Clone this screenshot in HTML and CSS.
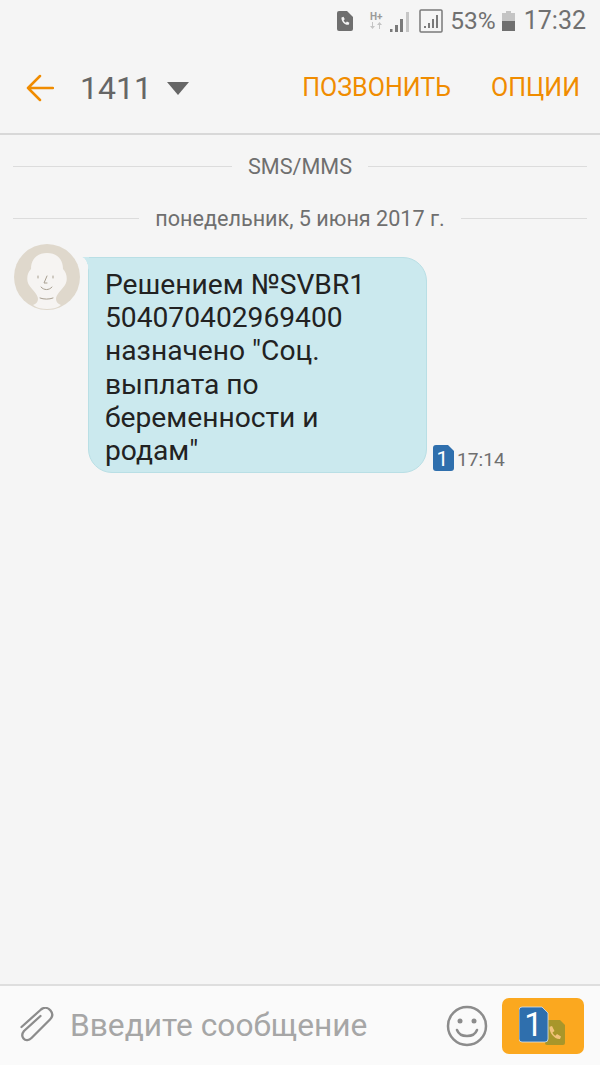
FILE: index.html

```html
<!DOCTYPE html>
<html>
<head>
    <title>1411</title>
    <link rel="stylesheet" href="styles.css">
</head>
<body>
    <div class="screen">
        <div class="status-bar">
            <svg class="st-call" width="16" height="20" viewBox="0 0 16 20">
                <path d="M2 0h8l6 6v12a2 2 0 0 1-2 2H2a2 2 0 0 1-2-2V2a2 2 0 0 1 2-2z" fill="#6f6f6f"/>
                <path d="M4.500 6.500l2-.8 1.300 2.600-1.200 1c.5 1.200 1.200 1.900 2.300 2.400l1-1.200 2.500 1.300-.7 2c-3.800.6-7.800-3.700-7.200-7.300z" fill="#f5f5f5"/>
            </svg>
            <div class="st-net">
                <span>H+</span>
                <svg width="14" height="7" viewBox="0 0 14 7"><path d="M3 0v4H1l2.500 3L6 4H4V0zM10 7V3H8l2.500-3L13 3h-2v4z" fill="#c4c4c4"/></svg>
            </div>
            <svg class="st-signal" width="20" height="21" viewBox="0 0 20 21">
                <path d="M0 21h2.500v-3H0zM5 21h3v-7H5zM10 21h3V8h-3z" fill="#7a7a7a"/>
                <path d="M16 21h3V1h-3z" fill="#c6c6c6"/>
            </svg>
            <svg class="st-signal-box" width="24" height="24" viewBox="0 0 24 24">
                <rect x="1" y="1" width="22" height="22" rx="1" fill="none" stroke="#7a7a7a" stroke-width="1.500"/>
                <path d="M5 19h2v-2H5zM9 19h2v-5H9zM13 19h2v-9h-2zM17 19h2V6h-2z" fill="#7a7a7a"/>
            </svg>
            <span class="st-text st-percent">53%</span>
            <svg class="st-battery" width="13" height="20" viewBox="0 0 13 20">
                <path d="M4 0h5v2h4v8H0V2h4z" fill="#c4c4c4"/>
                <path d="M0 10h13v10H0z" fill="#6f6f6f"/>
            </svg>
            <span class="st-text st-time">17:32</span>
        </div>

        <div class="app-bar">
            <svg class="back" width="28" height="28" viewBox="0 0 28 28">
                <path d="M27 14H2M14 2L2 14l12 12" fill="none" stroke="#f08c00" stroke-width="2.500" stroke-linecap="round" stroke-linejoin="round"/>
            </svg>
            <span class="contact">1411</span>
            <svg class="caret" width="22" height="13" viewBox="0 0 22 13"><path d="M0 0h22L11 13z" fill="#666"/></svg>
            <a class="action call">ПОЗВОНИТЬ</a>
            <a class="action">ОПЦИИ</a>
        </div>

        <div class="thread">
            <div class="divider"><span>SMS/MMS</span></div>
            <div class="divider date"><span>понедельник, 5 июня 2017 г.</span></div>

            <div class="message">
                <svg class="avatar" width="66" height="66" viewBox="0 0 66 66">
                    <circle cx="33" cy="33" r="33" fill="#dfd8cc"/>
                    <path d="M33 9C23 9 17 15 17 25c-4 4-5 11-2 16 3 5 9 9 9 14 0 3-2 5-5 6 4 3 9 4 14 4s10-1 14-4c-3-1-5-3-5-6 0-5 6-9 9-14 3-5 2-12-2-16C49 15 43 9 33 9z" fill="#f6f4f2"/>
                    <path d="M24 32v2M39 32v2M33 32l-3 7h3M27 43c3 3.500 8 3.500 11 0M26 54c4 1.500 9 1.500 13 0" fill="none" stroke="#a89f90" stroke-width="1" stroke-linecap="round"/>
                </svg>
                <div class="bubble">Решением №SVBR1<br>504070402969400<br>назначено "Соц.<br>выплата по<br>беременности и<br>родам"</div>
                <div class="meta">
                    <svg class="sim-small" width="21" height="26" viewBox="0 0 21 26">
                        <path d="M3 0h12l6 6v17a3 3 0 0 1-3 3H3a3 3 0 0 1-3-3V3a3 3 0 0 1 3-3z" fill="#2f6fad"/>
                        <text x="9.500" y="21" class="sim-num-small">1</text>
                    </svg>
                    <span class="meta-time">17:14</span>
                </div>
            </div>
        </div>

        <div class="composer">
            <svg class="clip" width="34" height="37" viewBox="0 0 34 37">
                <path d="M1.500 20L21 2.500c3-2.500 7-2 9.500 1 2.500 3 2 6.500-.5 9L11.500 31c-2.500 2.500-6 3-8 .5-2-2.500-1.500-5 .5-7.500L20.500 9" fill="none" stroke="#8c8c8c" stroke-width="2.300" stroke-linecap="round"/>
            </svg>
            <span class="placeholder">Введите сообщение</span>
            <svg class="smile" width="42" height="42" viewBox="0 0 42 42">
                <circle cx="21" cy="21" r="19" fill="none" stroke="#8c8c8c" stroke-width="2.500"/>
                <circle cx="14" cy="16" r="2.500" fill="#8c8c8c"/>
                <circle cx="28" cy="16" r="2.500" fill="#8c8c8c"/>
                <path d="M11 25c3 8 17 8 20 0" fill="none" stroke="#8c8c8c" stroke-width="2.500" stroke-linecap="round"/>
            </svg>
            <div class="send">
                <svg width="48" height="40" viewBox="0 0 48 40">
                    <path d="M26 14h15l5 5v18a2 2 0 0 1-2 2H28a2 2 0 0 1-2-2z" fill="#a8962a"/>
                    <path d="M30 21l3-1 2.500 5-2 1.500c.6 1.600 1.600 2.600 3 3.300l1.500-1.800 4 2.500-1 2.500c-5.500.5-11-6.500-10.500-12z" fill="#f2c27a"/>
                    <path d="M3 1h20l6 6v26a3 3 0 0 1-3 3H3a3 3 0 0 1-3-3V4a3 3 0 0 1 3-3z" fill="#2f6fad" stroke="#d7e3ee" stroke-width=".8"/>
                    <text x="14.500" y="30" class="sim-num">1</text>
                </svg>
            </div>
        </div>
    </div>
</body>
</html>
```

FILE: styles.css

```css
html, body { margin: 0; padding: 0; }
body { font-family: Roboto, "Liberation Sans", sans-serif; background-color: #f5f5f5; color: #222; }
.screen { width: 600px; height: 1065px; display: flex; flex-direction: column; overflow: hidden; }

.status-bar {
    height: 42px;
    display: flex;
    align-items: center;
    justify-content: flex-end;
    padding-right: 14px;
    color: #707070;
    flex: none;
}
.st-call { margin-right: 15px; }
.st-net {
    width: 16px;
    margin-right: 6px;
    display: flex;
    flex-direction: column;
    align-items: center;
    font-size: 10px;
    line-height: 11px;
    font-weight: 700;
    color: #9a9a9a;
    margin-top: -3px;
}
.st-net svg { display: block; }
.st-signal { margin-right: 9px; }
.st-signal-box { margin-right: 7px; }
.st-text { font-size: 25px; line-height: 42px; }
.st-percent { font-size: 24.500px; margin-right: 6px; }
.st-battery { margin-right: 9px; }

.app-bar {
    height: 91px;
    display: flex;
    align-items: center;
    padding: 0 20px 0 26px;
    border-bottom: 2px solid #d8d8d8;
    flex: none;
}
.back { margin-right: 26px; }
.contact { font-size: 32px; color: #666; margin-right: 15px; }
.caret { margin-top: 2px; }
.action { font-size: 25px; color: #f08c00; }
.call { margin-left: auto; margin-right: 40px; }

.thread { flex: 1; padding: 0 13px; }
.divider {
    display: flex;
    align-items: center;
    gap: 16px;
    height: 24px;
    margin-top: 19px;
    color: #6f6f6f;
    font-size: 21.600px;
}
.divider::before, .divider::after { content: ""; flex: 1; height: 1px; background-color: #dcdcdc; }
.date { margin-top: 28px; }

.message { display: flex; margin-top: 14px; align-items: flex-start; }
.avatar { flex: none; margin-left: 1px; }
.bubble {
    position: relative;
    margin-top: 13px;
    margin-left: 8px;
    width: 339px;
    box-sizing: border-box;
    height: 216px;
    padding: 10px 10px 0 16px;
    font-size: 28.200px;
    line-height: 33.200px;
    color: #222;
    background-color: #cbe9ee;
    border: 1px solid #b9dfe5;
    border-radius: 0 24px 24px 24px;
}
.bubble::before {
    content: "";
    position: absolute;
    left: -7px;
    top: -1px;
    width: 7px;
    height: 18px;
    background: radial-gradient(ellipse 7px 18px at 0 100%, transparent 97%, #cbe9ee 100%);
}
.meta {
    display: flex;
    align-items: center;
    gap: 3px;
    margin-top: 200px;
    margin-left: 6px;
    font-size: 19.200px;
    color: #6f6f6f;
}
.meta-time { margin-top: 4px; }
.sim-small { display: block; }
.sim-num-small { font-size: 21px; fill: #fff; text-anchor: middle; }

.composer {
    height: 79px;
    display: flex;
    align-items: center;
    border-top: 2px solid #dedede;
    background-color: #fafafa;
    flex: none;
    padding-left: 20px;
}
.clip { margin-right: 16px; }
.placeholder { font-size: 31.700px; color: #a6a6a6; }
.smile { margin-left: auto; margin-right: 14px; }
.send {
    width: 82px;
    height: 56px;
    margin-right: 16px;
    background-color: #fba81f;
    border-radius: 7px;
    display: flex;
    align-items: center;
    justify-content: center;
}
.send svg { display: block; }
.sim-num { font-size: 33px; fill: #fff; text-anchor: middle; }
```
